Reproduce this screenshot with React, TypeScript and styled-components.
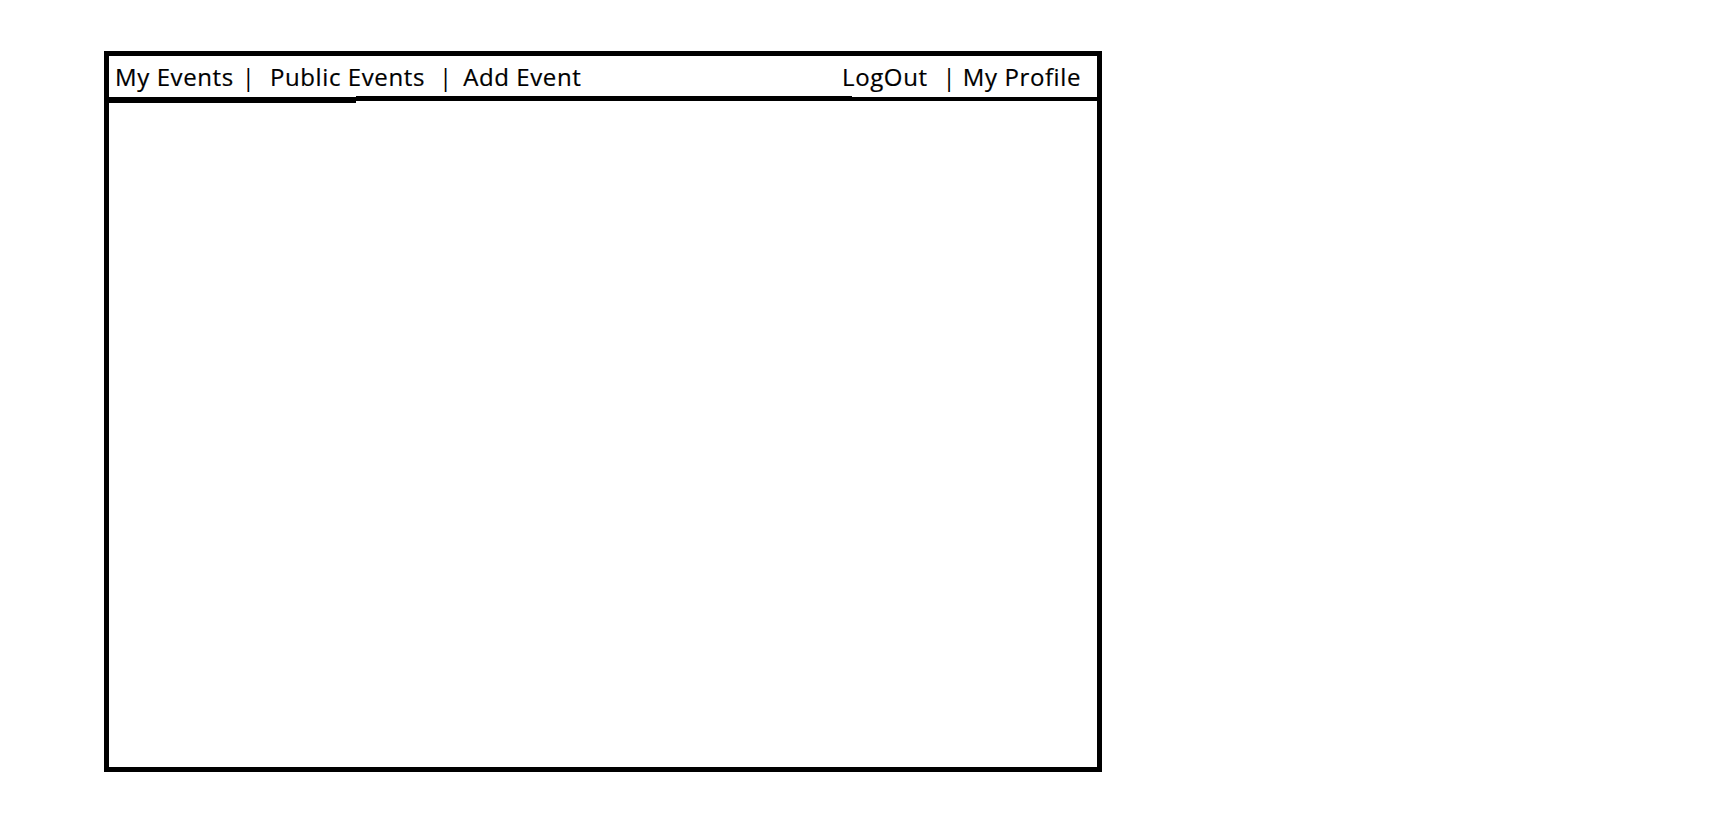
import styled, { createGlobalStyle } from 'styled-components';

const GlobalStyle = createGlobalStyle`
  html, body {
    margin: 0;
    padding: 0;
    background: #ffffff;
  }
  body {
    font-family: "Open Sans", "Noto Sans", sans-serif;
    color: #000000;
  }
`;

const Page = styled.div`
  padding: 51px 0 0 104px;
`;

const Frame = styled.div`
  box-sizing: border-box;
  width: 998px;
  height: 721px;
  border: 5px solid #000;
  display: flex;
  flex-direction: column;
`;

const Header = styled.div`
  box-sizing: border-box;
  height: 40px;
  display: flex;
  align-items: center;
  justify-content: space-between;
  padding: 2px 16px 0 6px;
`;

const NavGroup = styled.nav`
  display: flex;
  align-items: center;
`;

const NavLink = styled.a`
  font-size: 24px;
  line-height: 1;
  letter-spacing: 0.6px;
  color: #000;
  text-decoration: none;
  white-space: nowrap;
  cursor: pointer;
  -webkit-text-stroke: 0.2px #000;
`;

const Separator = styled.span<{ $before: number; $after: number }>`
  font-size: 24px;
  line-height: 1;
  margin: 0 ${(p) => p.$after}px 0 ${(p) => p.$before}px;
`;

// the drawn line under the header is a little uneven, so it's three pieces
const Divider = styled.div`
  display: flex;
  align-items: flex-start;
  height: 7px;
`;

const Segment = styled.div<{ $width?: number; $top: number; $thick: number }>`
  ${(p) => (p.$width ? `width: ${p.$width}px;` : 'flex: 1;')}
  margin-top: ${(p) => p.$top}px;
  height: ${(p) => p.$thick}px;
  background: #000;
`;

const Content = styled.main`
  flex: 1;
`;

export default function App() {
  return (
    <>
      <GlobalStyle />
      <Page>
        <Frame>
          <Header>
            <NavGroup>
              <NavLink>My Events</NavLink>
              <Separator $before={8} $after={15}>|</Separator>
              <NavLink>Public Events</NavLink>
              <Separator $before={14} $after={11}>|</Separator>
              <NavLink>Add Event</NavLink>
            </NavGroup>
            <NavGroup>
              <NavLink>LogOut</NavLink>
              <Separator $before={15} $after={7}>|</Separator>
              <NavLink>My Profile</NavLink>
            </NavGroup>
          </Header>
          <Divider>
            <Segment $width={247} $top={1} $thick={6} />
            <Segment $width={496} $top={0} $thick={5} />
            <Segment $top={1} $thick={4} />
          </Divider>
          <Content />
        </Frame>
      </Page>
    </>
  );
}
